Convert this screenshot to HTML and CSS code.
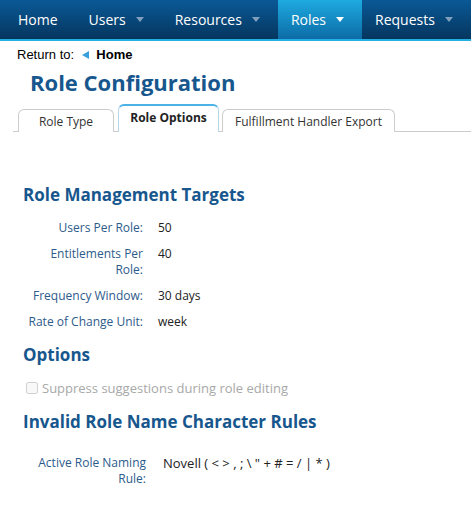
FILE: index.html
```html
<!DOCTYPE html>
<html lang="en">
<head>
    <meta charset="UTF-8">
    <title>Role Configuration</title>
    <link rel="stylesheet" href="styles.css">
</head>
<body>
    <ul class="nav">
        <li class="nav-item">Home</li>
        <li class="nav-item">Users <span class="caret"></span></li>
        <li class="nav-item">Resources <span class="caret"></span></li>
        <li class="nav-item active">Roles <span class="caret"></span></li>
        <li class="nav-item">Requests <span class="caret"></span></li>
    </ul>

    <div class="return-to">
        Return to: <span class="back-arrow"></span> <b>Home</b>
    </div>

    <h1 class="page-title">Role Configuration</h1>

    <div class="tabs">
        <div class="tab tab-type">Role Type</div>
        <div class="tab active">Role Options</div>
        <div class="tab tab-export">Fulfillment Handler Export</div>
    </div>

    <div class="content">
        <h2 class="section-title first">Role Management Targets</h2>
        <div class="props">
            <div class="prop-label">Users Per Role:</div>
            <div class="prop-value">50</div>
            <div class="prop-label">Entitlements Per Role:</div>
            <div class="prop-value">40</div>
            <div class="prop-label">Frequency Window:</div>
            <div class="prop-value">30 days</div>
            <div class="prop-label">Rate of Change Unit:</div>
            <div class="prop-value">week</div>
        </div>

        <h2 class="section-title">Options</h2>
        <label class="check-row">
            <input type="checkbox" disabled> Suppress suggestions during role editing
        </label>

        <h2 class="section-title">Invalid Role Name Character Rules</h2>
        <div class="props naming">
            <div class="prop-label">Active Role Naming Rule:</div>
            <div class="prop-value">Novell ( &lt; &gt; , ; \ " + # = / | * )</div>
        </div>
    </div>
</body>
</html>
```

FILE: styles.css
```css
body {
    margin: 0;
    font-family: "Open Sans", sans-serif;
    font-size: 12px;
    color: #333;
    background: #fff;
}

/* Barra de navegacion superior */
.nav {
    display: flex;
    list-style: none;
    margin: 0;
    padding: 0 0 0 5px;
    height: 39px;
    background: linear-gradient(#0a5996, #05365f);
    border-bottom: 2px solid #23b0e2;
}
.nav-item {
    display: flex;
    align-items: center;
    padding: 0 18px 0 13px;
    color: #fff;
    font-size: 14px;
}
.nav-item.active {
    background: linear-gradient(#1eaae0, #0c6ba6);
}
.caret {
    display: inline-block;
    margin-left: 10px;
    width: 0;
    height: 0;
    border-left: 4px solid transparent;
    border-right: 4px solid transparent;
    border-top: 5px solid #7f9fbd;
}
.nav-item.active .caret {
    border-top-color: #fff;
}

.return-to {
    font-family: "Liberation Sans", Arial, sans-serif;
    font-size: 13px;
    color: #000;
    padding: 6px 0 0 17px;
    height: 18px;
}
.back-arrow {
    display: inline-block;
    width: 0;
    height: 0;
    border-top: 4px solid transparent;
    border-bottom: 4px solid transparent;
    border-right: 7px solid #3a9fdc;
    margin: 0 4px 0 4px;
}

.page-title {
    margin: 3px 0 0 30px;
    font-size: 22px;
    font-weight: bold;
    color: #17578d;
    line-height: 28px;
}

/* Pestanas */
.tabs {
    display: flex;
    align-items: flex-end;
    gap: 4px;
    margin: 0 0 0 13px;
    padding-left: 5px;
    height: 35px;
    border-bottom: 1px solid #ccc;
}
.tab {
    height: 22px;
    line-height: 24px;
    border: 1px solid #ccc;
    border-bottom: none;
    border-radius: 6px 6px 0 0;
    color: #333;
    margin-bottom: -1px;
    background: #fff;
    text-align: center;
}
.tab-type {
    width: 94px;
}
.tab-export {
    width: 171px;
    margin-left: -1px;
}
.tab.active {
    width: 99px;
    height: 26px;
    line-height: 24px;
    font-weight: bold;
    color: #222;
    border-top: 2px solid #4cb3e6;
    border-left-color: #b8d6ea;
    border-right-color: #b8d6ea;
}

.content {
    padding-left: 23px;
}
.section-title {
    margin: 0;
    font-size: 17px;
    font-weight: bold;
    color: #17578d;
    line-height: 24px;
}
.section-title.first {
    margin-top: 51px;
}

.props {
    display: grid;
    grid-template-columns: 120px 1fr;
    column-gap: 15px;
    row-gap: 10px;
    margin: 13px 0 13px;
    line-height: 16px;
    font-size: 12px;
}
.prop-label {
    text-align: right;
    color: #2d5b8b;
}
.prop-value {
    color: #222;
}
.props.naming {
    grid-template-columns: 123px 1fr;
    column-gap: 17px;
    margin-top: 21px;
}
.props.naming .prop-value {
    font-size: 13px;
}

.check-row {
    display: flex;
    align-items: center;
    gap: 4px;
    margin: 12px 0 13px 3px;
    color: #a8a8a8;
    line-height: 18px;
    font-size: 13px;
}
.check-row input {
    margin: 0;
    width: 12px;
    height: 12px;
}
```
